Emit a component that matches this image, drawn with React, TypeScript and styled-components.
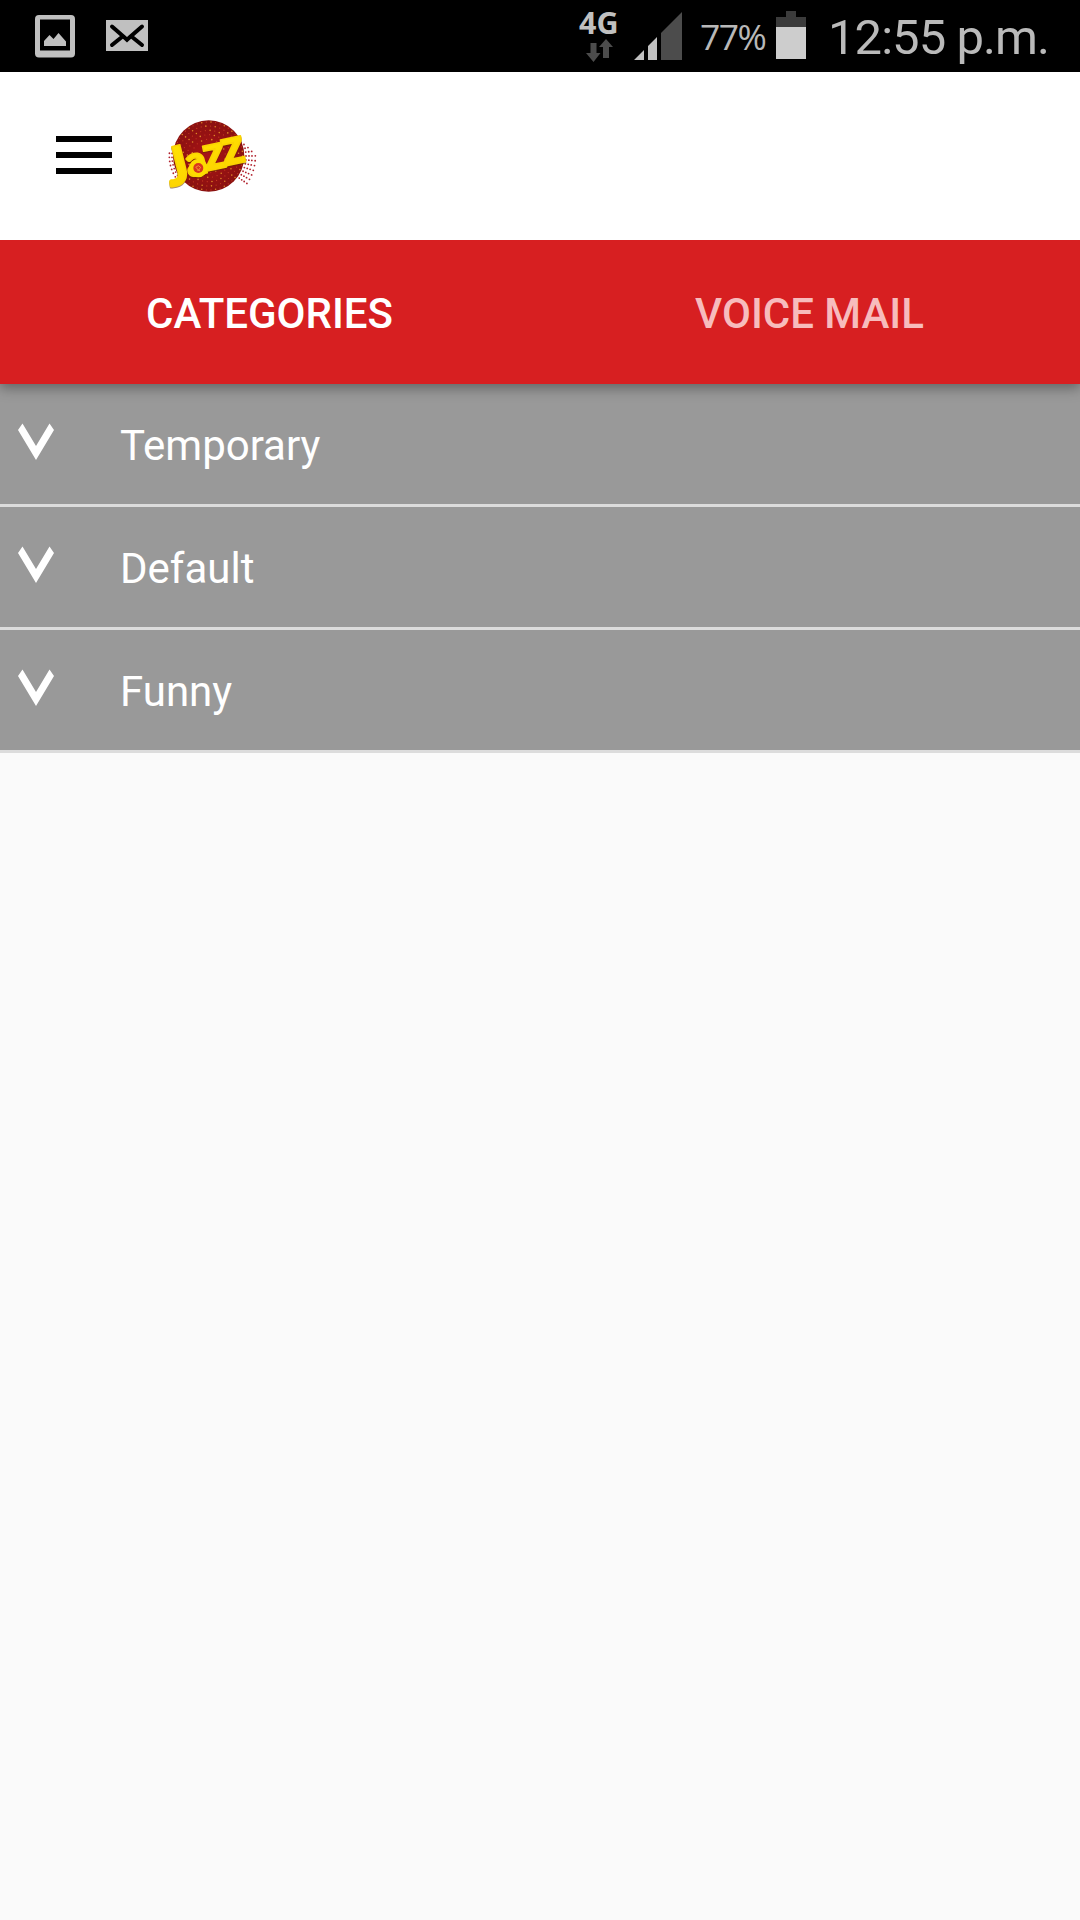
import React from 'react';
import styled, { createGlobalStyle } from 'styled-components';

const GlobalStyle = createGlobalStyle`
  * { box-sizing: border-box; }
  html, body { margin: 0; background: #fafafa; }
  body { font-family: Roboto, "Noto Sans", sans-serif; }
`;

const Screen = styled.div`
  display: flex;
  flex-direction: column;
  width: 1080px;
  height: 1920px;
  background: #fafafa;
  overflow: hidden;
`;

const StatusBar = styled.div`
  display: flex;
  justify-content: space-between;
  height: 72px;
  padding: 0 32px 0 35px;
  background: #000;
  color: #c0c0c0;
`;

const StatusGroup = styled.div`
  display: flex;
  align-items: flex-start;
`;

const Glyph = styled.svg<{ $top?: number; $left?: number }>`
  display: block;
  flex: none;
  margin-top: ${(p) => p.$top ?? 0}px;
  margin-left: ${(p) => p.$left ?? 0}px;
`;

const Network = styled.div`
  display: flex;
  flex-direction: column;
  width: 40px;
  padding-top: 6px;
  font: 700 30.5px/32px "Noto Sans", sans-serif;
`;

const Percent = styled.span`
  width: 65px;
  margin: 15px 0 0 18px;
  color: #b8b8b8;
  font: 400 35.5px/42px "Open Sans", sans-serif;
  letter-spacing: -1.5px;
  white-space: nowrap;
`;

const Clock = styled.span`
  width: 220px;
  margin: 8px 0 0 22px;
  color: #bababa;
  font-size: 49px;
  font-weight: 400;
  line-height: 60px;
  letter-spacing: -0.95px;
  white-space: nowrap;
`;

const Header = styled.header`
  display: flex;
  align-items: center;
  height: 168px;
  padding-left: 56px;
  background: #fff;
`;

const MenuButton = styled.button`
  display: flex;
  flex-direction: column;
  gap: 10px;
  width: 56px;
  margin: 0 43px 2px 0;
  padding: 0;
  border: 0;
  background: none;
`;

const MenuBar = styled.span`
  height: 6px;
  background: #000;
`;

const Tabs = styled.nav`
  display: grid;
  grid-template-columns: 1fr 1fr;
  height: 144px;
  background: #d71f21;
  box-shadow: 0 4px 12px rgba(0, 0, 0, 0.36);
  clip-path: inset(0 0 -24px 0);
  z-index: 1;
`;

const Tab = styled.div<{ $active?: boolean }>`
  display: flex;
  align-items: center;
  justify-content: center;
  padding: 3px 1px 0 0;
  color: ${(p) => (p.$active ? '#fff' : '#f7bcbd')};
  font-size: 42px;
  font-weight: 500;
`;

const List = styled.ul`
  margin: 0;
  padding: 0;
  list-style: none;
`;

const Row = styled.li`
  display: flex;
  height: 123px;
  padding-left: 18px;
  border-bottom: 3px solid #dcdcdc;
  background: #999;
  color: #fff;
`;

const RowLabel = styled.span`
  margin-left: 66px;
  padding-top: 2px;
  font-size: 42px;
  line-height: 120px;
`;

const Wordmark = styled.g`
  font-family: Lato, sans-serif;
  font-weight: 900;
  stroke-linejoin: round;
  filter: drop-shadow(0 3px 2px rgba(90, 40, 0, 0.55));
`;

const rings = [
  { r: 102, n: 46 }, { r: 90, n: 40 }, { r: 77, n: 34 }, { r: 64, n: 28 }, { r: 50, n: 20 },
];

const dots = rings.flatMap(({ r, n }, ring) =>
  Array.from({ length: n }, (_, i) => {
    const a = ((i + ring * 0.4) / n) * Math.PI * 2;
    return { x: 161 + Math.cos(a) * r, y: 153 + Math.sin(a) * r, warm: (i * 7 + ring * 3) % 5 < 2 };
  }),
);

const outerDots = [112, 121, 130, 140].flatMap((r, ring) =>
  Array.from({ length: 10 - ring }, (_, i) => {
    const a = ((-19 + ring * 6 + i * 6) * Math.PI) / 180;
    return { x: 161 + Math.cos(a) * r, y: 155 + Math.sin(a) * r };
  }),
);

const leftDots = [110, 118].flatMap((r) =>
  Array.from({ length: 7 }, (_, i) => {
    const a = ((148 + i * 6) * Math.PI) / 180;
    return { x: 161 + Math.cos(a) * r, y: 153 + Math.sin(a) * r };
  }),
);

const letters = [
  { c: 'J', size: 160, t: 'translate(46 246) rotate(-14)' },
  { c: 'a', size: 124, t: 'translate(101 217) rotate(-14)' },
  { c: 'z', size: 146, t: 'translate(153 199) rotate(-12)' },
  { c: 'z', size: 154, t: 'translate(207 184) rotate(-12)' },
];

function JazzLogo() {
  return (
    <Glyph width="115" height="100" viewBox="0 0 345 300" $top={-2}>
      <defs>
        <radialGradient id="disc">
          <stop offset="0" stopColor="#a81316" />
          <stop offset="1" stopColor="#8a1110" />
        </radialGradient>
        <linearGradient id="gold" x1="0" y1="0" x2="0" y2="1">
          <stop offset="0" stopColor="#ffe600" />
          <stop offset="1" stopColor="#fdd200" />
        </linearGradient>
      </defs>
      <circle cx="161" cy="153" r="107" fill="url(#disc)" />
      {dots.map((d, i) => (
        <circle key={i} cx={d.x} cy={d.y} r={d.warm ? 2.3 : 1.8} fill={d.warm ? '#e08a28' : '#c83a22'} />
      ))}
      {[...outerDots, ...leftDots].map((d, i) => (
        <circle key={i} cx={d.x} cy={d.y} r="2.7" fill="#b0202c" />
      ))}
      <Wordmark>
        {letters.map((l, i) => (
          <text key={i} transform={l.t} fontSize={l.size} fill="url(#gold)" stroke="#fbd400" strokeWidth="5">
            {l.c}
          </text>
        ))}
        <circle cx="130" cy="189" r="21" fill="none" stroke="#fddb00" strokeWidth="14" />
      </Wordmark>
      <circle cx="130" cy="189" r="15" fill="#d9361e" />
      <path d="M122 187l8-5 7 5-6 8zM126 195l9 2" fill="none" stroke="#f5a03a" strokeWidth="2.5" />
    </Glyph>
  );
}

const categories = ['Temporary', 'Default', 'Funny'];

export default function App() {
  return (
    <>
      <GlobalStyle />
      <Screen>
        <StatusBar>
          <StatusGroup>
            <Glyph width="40" height="43" viewBox="0 0 40 43" $top={14.5}>
              <path
                fill="#c0c0c0"
                fillRule="evenodd"
                d="M4 0h32a4 4 0 0 1 4 4v34.500a4 4 0 0 1-4 4H4a4 4 0 0 1-4-4V4a4 4 0 0 1 4-4zM5 4.500v31h30v-31z"
              />
              <path fill="#c0c0c0" d="M9 31v-5l5.500-6 4 4 5-6 7.500 8.500V31z" />
            </Glyph>
            <Glyph width="42" height="31" viewBox="0 0 42 31" $top={20} $left={31}>
              <path fill="#c0c0c0" d="M0 0h42v31H0z" />
              <path
                d="M6 6.500L18 17l3 2.700 3-2.700L36 6.500M6 25l10.500-8.500M36 25l-10.500-8.500"
                fill="none"
                stroke="#000"
                strokeWidth="4"
                strokeLinecap="round"
              />
            </Glyph>
          </StatusGroup>
          <StatusGroup>
            <Network>
              4G
              <Glyph width="27" height="23" viewBox="0 0 27 23" $left={7} $top={1}>
                <path fill="#4c4c4c" d="M4.500 4h6v10H14.500L7.500 23 0 14h4.500zM20 0l7 8h-4v11h-6V8h-4z" />
              </Glyph>
            </Network>
            <Glyph width="48" height="48" viewBox="0 0 48 48" $top={12} $left={15}>
              <path fill="#c0c0c0" d="M0 48L10 38v10zM14 34l9-9v23h-9z" />
              <path fill="#4c4c4c" d="M27 21L48 0v48H27z" />
            </Glyph>
            <Percent>77%</Percent>
            <Glyph width="30" height="48" viewBox="0 0 30 48" $top={11} $left={11}>
              <path fill="#3b3b3b" d="M10 0h10v6h10v11H0V6h10z" />
              <path fill="#cdcdcd" d="M0 16h30v32H0z" />
            </Glyph>
            <Clock>12:55 p.m.</Clock>
          </StatusGroup>
        </StatusBar>
        <Header>
          <MenuButton aria-label="Menu">
            <MenuBar />
            <MenuBar />
            <MenuBar />
          </MenuButton>
          <JazzLogo />
        </Header>
        <Tabs>
          <Tab $active>CATEGORIES</Tab>
          <Tab>VOICE MAIL</Tab>
        </Tabs>
        <List>
          {categories.map((name) => (
            <Row key={name}>
              <Glyph width="36" height="37" viewBox="0 0 36 37" $top={39}>
                <path fill="#fff" d="M4.500 0.500L18 23 31.500 0.500 36 7 18 37 0 7z" />
              </Glyph>
              <RowLabel>{name}</RowLabel>
            </Row>
          ))}
        </List>
      </Screen>
    </>
  );
}
